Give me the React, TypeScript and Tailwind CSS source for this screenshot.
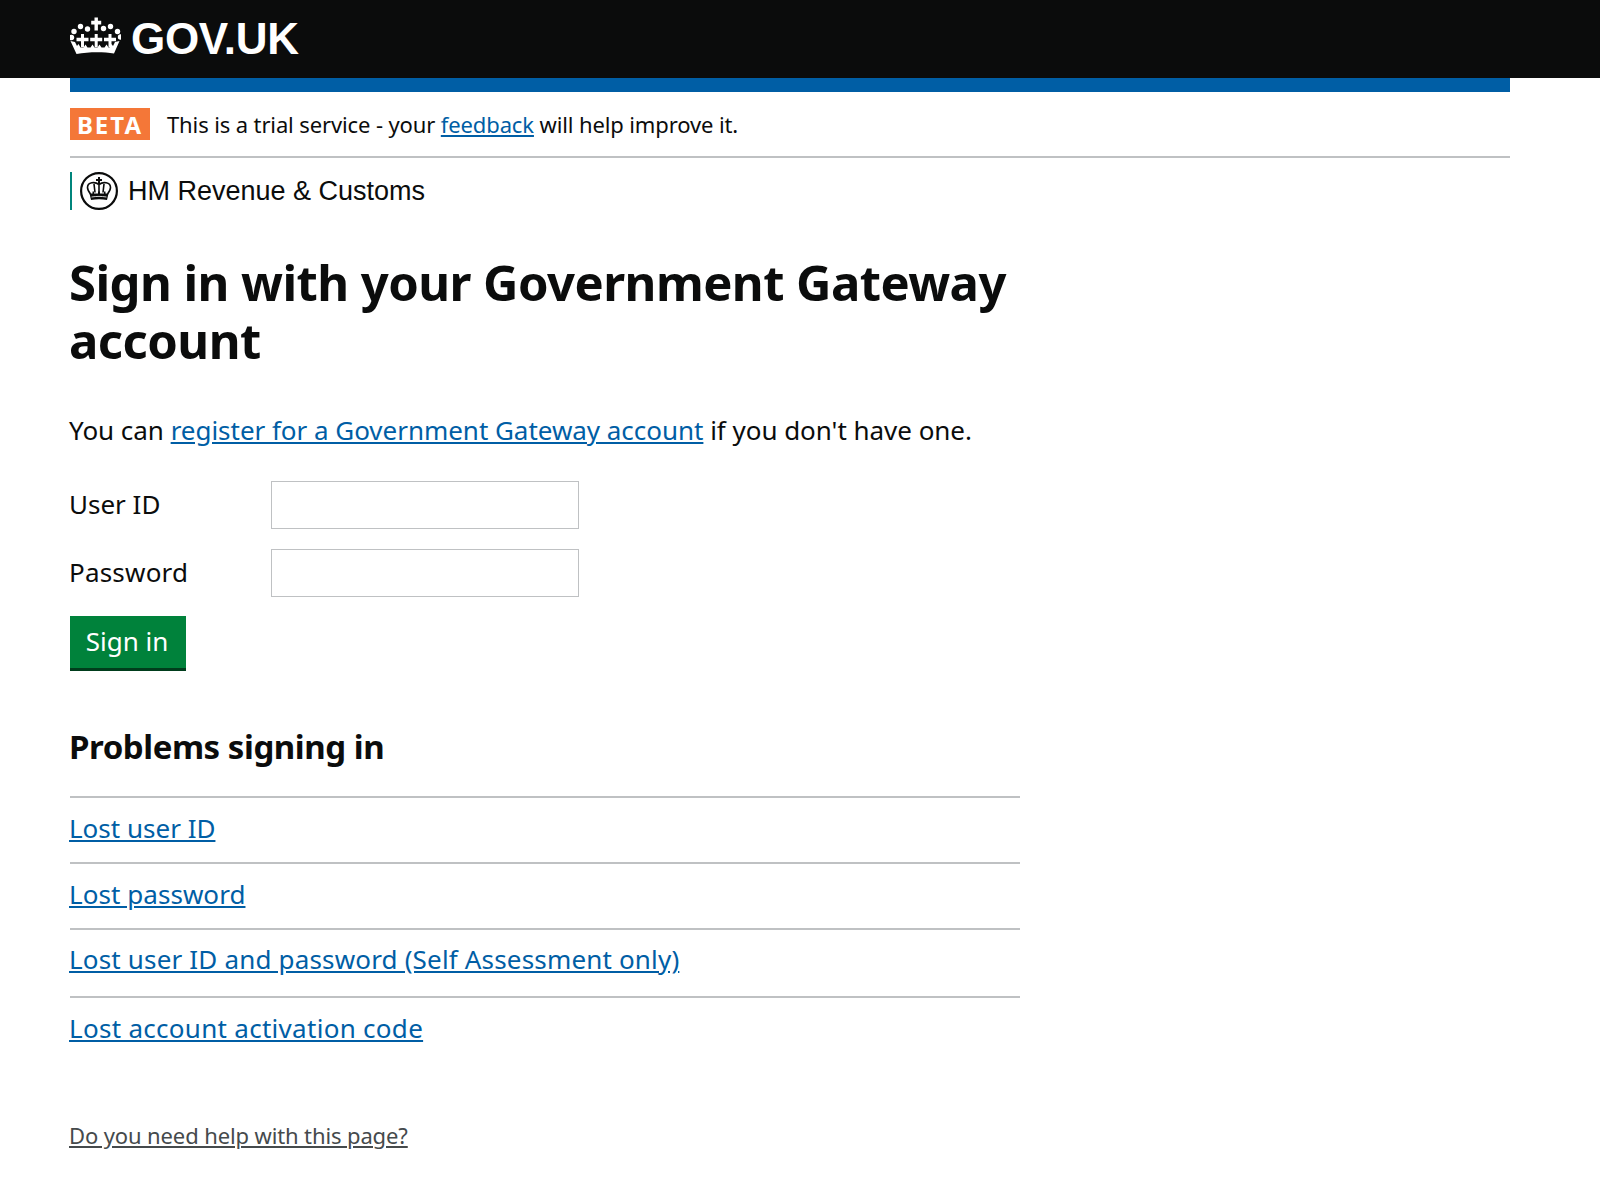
const body = { fontFamily: '"Noto Sans", "Open Sans", sans-serif' };
const arial = { fontFamily: '"Liberation Sans", Arial, sans-serif' };

function HeaderCrown() {
  const pearls = [
    [15, 14.5], [22, 17], [38, 16.5], [45, 14.5], [8.5, 19.5], [52, 19.5], [6, 25.5], [55, 25],
  ];
  const fleurs = [17, 30.7, 44.5];
  return (
    <svg className="mb-[7px] h-[37px] w-[51px]" viewBox="4.500 5 51 37" fill="#ffffff" aria-hidden="true">
      <path d="M29 5.500h3.400v3.300h3.300v3.600h-3.300v6h-3.400v-6h-3.300V8.800H29z" />
      {pearls.map(([x, y]) => (
        <circle key={`${x}-${y}`} cx={x} cy={y} r="2.700" />
      ))}
      {fleurs.map((x) => (
        <path
          key={x}
          d={`M${x - 1.5} 22h3v3.800h4.500v3.400h-4.500v6h-3v-6h-4.500v-3.400h4.500z`}
        />
      ))}
      <path d="M5 29l4.500 1 2 4 1.500-2 2 3.500h3l2-3 2 3h3l2-3 2 3h3l2-3 2 3h3l2-3 2 3h1l2-3.500 1.500 2 2-4 4.500-1-5.500 12.500C38 39.800 23 39.800 11 42z" />
    </svg>
  );
}

function HmrcCrest() {
  return (
    <svg className="h-[38px] w-[38px] shrink-0" viewBox="0 0 38 38" aria-hidden="true">
      <circle cx="19" cy="19" r="17.900" fill="none" stroke="#0b0c0c" strokeWidth="2.200" />
      <path d="M18 5h2v2h2v2h-2v3h-2V9h-2V7h2z" fill="#0b0c0c" />
      <g fill="none" stroke="#0b0c0c" strokeWidth="1.600">
        <path d="M19 12.500c-4-3-11.500-2.500-11.500 3 0 2.500 1.500 4.500 3 6.500" />
        <path d="M19 12.500c4-3 11.500-2.500 11.500 3 0 2.500-1.500 4.500-3 6.500" />
        <path d="M19 12.500v8" />
        <path d="M14 12l1 8.500M24 12l-1 8.500" />
      </g>
      <path d="M9.500 21.500h3v-2h1.500v2h4v-2h2v2h4v-2h1.500v2h3l-1.500 6.500C22 27 16 27 11 28z" fill="#0b0c0c" />
      <path d="M11.500 25c5-.8 10-.8 15 0" fill="none" stroke="#ffffff" strokeWidth="0.800" />
    </svg>
  );
}

function Rule() {
  return <div className="h-[2px] bg-[#bfc1c3]" />;
}

function TextLink({ children }: { children: React.ReactNode }) {
  return <a href="#" className="text-[#005ea5] underline">{children}</a>;
}

export default function App() {
  return (
    <div className="min-h-[1190px] bg-white text-[#0b0c0c]" style={body}>
      <header className="h-[78px] bg-[#0b0c0c]">
        <div className="flex h-full items-center pl-[70px] text-white">
          <HeaderCrown />
          <span className="ml-[10px] text-[44px] leading-none font-bold tracking-[-0.3px]" style={arial}>GOV.UK</span>
        </div>
      </header>
      <div className="mx-[70px] mr-[90px]">
        <div className="h-[14px] bg-[#005ea5]" />
        <div className="flex h-[64px] items-center">
          <strong className="flex h-[32px] w-[80px] items-center justify-center bg-[#f47738] pt-[2px] text-[24px] tracking-[2px] font-bold text-white">BETA</strong>
          <p className="ml-[17px] text-[22px] tracking-[-0.12px]">This is a trial service - your <TextLink>feedback</TextLink> will help improve it.</p>
        </div>
        <Rule />
        <div className="mt-[14px] flex h-[38px] items-center border-l-2 border-[#00857c] pl-[8px]">
          <HmrcCrest />
          <span className="ml-[10px] text-[27px]" style={arial}>HM Revenue &amp; Customs</span>
        </div>
        <main className="w-[950px]">
          <h1 className="mt-[43px] -ml-px text-[49px] leading-[58px] font-bold tracking-[-0.55px]">Sign in with your Government Gateway account</h1>
          <p className="mt-[43px] -ml-px text-[26px] leading-[36px] tracking-[-0.03px]">You can <TextLink>register for a Government Gateway account</TextLink> if you don't have one.</p>
          <div className="mt-[33px] flex flex-col gap-[20px] text-[26px]">
            <label className="flex items-center">
              <span className="-ml-px w-[202px] pb-[2px]">User ID</span>
              <input className="h-[48px] w-[308px] border border-[#bfc1c3]" />
            </label>
            <label className="flex items-center">
              <span className="-ml-px w-[202px] pb-[2px] tracking-[0.2px]">Password</span>
              <input className="h-[48px] w-[308px] border border-[#bfc1c3]" />
            </label>
          </div>
          <button className="mt-[19px] block h-[55px] w-[116px] border-b-[3px] border-[#003d1c] bg-[#00823b] pr-[2px] pb-[2px] text-[26px] text-white">Sign in</button>
          <h2 className="mt-[51px] -ml-px text-[33px] leading-[50px] font-bold tracking-[-0.45px]">Problems signing in</h2>
          <div className="mt-[24px] text-[26px]">
            <Rule />
            <div className="-ml-px flex h-[64px] items-center pb-[4px]"><TextLink>Lost user ID</TextLink></div>
            <Rule />
            <div className="-ml-px flex h-[64px] items-center pb-[4px] tracking-[0.05px]"><TextLink>Lost password</TextLink></div>
            <Rule />
            <div className="-ml-px flex h-[66px] items-center pb-[8px] tracking-[0.17px]"><TextLink>Lost user ID and password (Self Assessment only)</TextLink></div>
            <Rule />
            <div className="-ml-px flex h-[64px] items-center pb-[4px] tracking-[0.29px]"><TextLink>Lost account activation code</TextLink></div>
          </div>
          <a href="#" className="mt-[57px] -ml-px inline-block text-[22px] tracking-[-0.12px] text-[#454a4c] underline">Do you need help with this page?</a>
        </main>
      </div>
    </div>
  );
}
